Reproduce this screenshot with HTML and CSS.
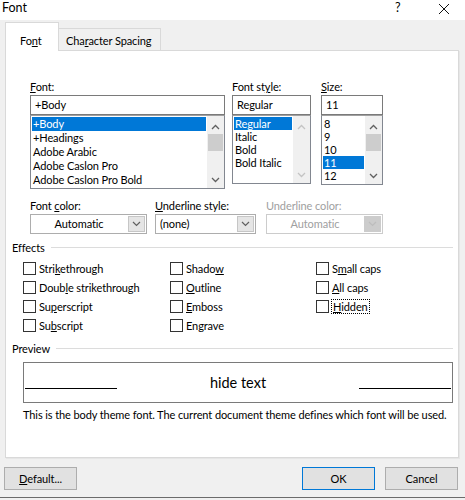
FILE: index.html
```html
<!DOCTYPE html>
<html>
<head>
<meta charset="utf-8">
<title>Font</title>
<link rel="stylesheet" href="styles.css">
</head>
<body>
<div class="dialog">
  <div class="titlebar">
    <span class="title">Font</span>
    <span class="help">?</span>
    <svg class="close" width="12" height="12" viewBox="0 0 12 12"><path d="M1 1L11 11M11 1L1 11" stroke="#111" stroke-width="1" fill="none"/></svg>
  </div>
  <div class="tabs">
    <div class="tab active">Fo<u>n</u>t</div>
    <div class="tab">Cha<u>r</u>acter Spacing</div>
  </div>
  <div class="panel">
    <div class="pickers">
      <div class="picker col-font">
        <div class="label"><u>F</u>ont:</div>
        <div class="input">+Body</div>
        <div class="list list-font">
          <div class="items rows14">
            <div class="item sel">+Body</div>
            <div class="item">+Headings</div>
            <div class="item">Adobe Arabic</div>
            <div class="item">Adobe Caslon Pro</div>
            <div class="item">Adobe Caslon Pro Bold</div>
          </div>
          <div class="scrollbar">
            <svg class="arrow" width="9" height="6" viewBox="0 0 9 6"><path d="M1 5L4.5 1.5L8 5" fill="none" stroke="#606060" stroke-width="1.3"/></svg>
            <div class="thumb"></div>
            <div class="spacer"></div>
            <svg class="arrow" width="9" height="6" viewBox="0 0 9 6"><path d="M1 1L4.5 4.5L8 1" fill="none" stroke="#606060" stroke-width="1.3"/></svg>
          </div>
        </div>
      </div>
      <div class="picker col-style">
        <div class="label">Font st<u>y</u>le:</div>
        <div class="input">Regular</div>
        <div class="list list-style">
          <div class="items rows13">
            <div class="item sel">Regular</div>
            <div class="item">Italic</div>
            <div class="item">Bold</div>
            <div class="item">Bold Italic</div>
          </div>
          <div class="scrollbar disabled">
            <svg class="arrow" width="9" height="6" viewBox="0 0 9 6"><path d="M1 5L4.5 1.5L8 5" fill="none" stroke="#c4c4c4" stroke-width="1.3"/></svg>
            <div class="spacer"></div>
            <svg class="arrow" width="9" height="6" viewBox="0 0 9 6"><path d="M1 1L4.5 4.5L8 1" fill="none" stroke="#c4c4c4" stroke-width="1.3"/></svg>
          </div>
        </div>
      </div>
      <div class="picker col-size">
        <div class="label"><u>S</u>ize:</div>
        <div class="input">11</div>
        <div class="list list-size">
          <div class="items rows13">
            <div class="item">8</div>
            <div class="item">9</div>
            <div class="item">10</div>
            <div class="item sel">11</div>
            <div class="item">12</div>
          </div>
          <div class="scrollbar">
            <svg class="arrow" width="9" height="6" viewBox="0 0 9 6"><path d="M1 5L4.5 1.5L8 5" fill="none" stroke="#606060" stroke-width="1.3"/></svg>
            <div class="thumb"></div>
            <div class="spacer"></div>
            <svg class="arrow" width="9" height="6" viewBox="0 0 9 6"><path d="M1 1L4.5 4.5L8 1" fill="none" stroke="#606060" stroke-width="1.3"/></svg>
          </div>
        </div>
      </div>
    </div>

    <div class="combos">
      <div class="combo-col c1">
        <div class="label">Font <u>c</u>olor:</div>
        <div class="combo">
          <span class="combo-text center">Automatic</span>
          <span class="combo-btn"><svg width="9" height="6" viewBox="0 0 9 6"><path d="M1 1L4.5 4.5L8 1" fill="none" stroke="#606060" stroke-width="1.2"/></svg></span>
        </div>
      </div>
      <div class="combo-col c2">
        <div class="label"><u>U</u>nderline style:</div>
        <div class="combo">
          <span class="combo-text">(none)</span>
          <span class="combo-btn"><svg width="9" height="6" viewBox="0 0 9 6"><path d="M1 1L4.5 4.5L8 1" fill="none" stroke="#606060" stroke-width="1.2"/></svg></span>
        </div>
      </div>
      <div class="combo-col c3">
        <div class="label disabled-text">Underline color:</div>
        <div class="combo disabled">
          <span class="combo-text center">Automatic</span>
          <span class="combo-btn"><svg width="9" height="6" viewBox="0 0 9 6"><path d="M1 1L4.5 4.5L8 1" fill="none" stroke="#bdbdbd" stroke-width="1.2"/></svg></span>
        </div>
      </div>
    </div>

    <div class="group-head effects-head"><span>Effects</span><div class="rule"></div></div>
    <div class="effects">
      <div class="check"><span class="box"></span><span>Stri<u>k</u>ethrough</span></div>
      <div class="check"><span class="box"></span><span>Shado<u>w</u></span></div>
      <div class="check"><span class="box"></span><span>S<u>m</u>all caps</span></div>
      <div class="check"><span class="box"></span><span>Doub<u>l</u>e strikethrough</span></div>
      <div class="check"><span class="box"></span><span><u>O</u>utline</span></div>
      <div class="check"><span class="box"></span><span><u>A</u>ll caps</span></div>
      <div class="check"><span class="box"></span><span>Su<u>p</u>erscript</span></div>
      <div class="check"><span class="box"></span><span><u>E</u>mboss</span></div>
      <div class="check"><span class="box"></span><span class="focus"><u>H</u>idden</span></div>
      <div class="check"><span class="box"></span><span>Su<u>b</u>script</span></div>
      <div class="check"><span class="box"></span><span>En<u>g</u>rave</span></div>
    </div>

    <div class="group-head preview-head"><span>Preview</span><div class="rule"></div></div>
    <div class="preview">
      <div class="pline"></div>
      <div class="ptext">hide text</div>
      <div class="pline"></div>
    </div>
    <div class="desc">This is the body theme font. The current document theme defines which font will be used.</div>
  </div>

  <div class="footer">
    <button class="btn"><u>D</u>efault...</button>
    <div class="grow"></div>
    <button class="btn default">OK</button>
    <button class="btn">Cancel</button>
  </div>
  <div class="frame-bottom"></div>
</div>
</body>
</html>
```

FILE: styles.css
```css
* { box-sizing: border-box; }
html, body { margin: 0; padding: 0; }
body {
  width: 465px;
  height: 500px;
  overflow: hidden;
  background: #f0f0f0;
  font-family: Lato, "Noto Sans", sans-serif;
  font-size: 11px;
  letter-spacing: -0.1px;
  color: #000;
}
u { text-decoration-thickness: 1px; text-underline-offset: 1px; }

.dialog { width: 465px; height: 500px; }

.titlebar {
  height: 20px;
  background: #fff;
  display: flex;
  align-items: flex-start;
  line-height: 16px;
}
.title { margin-left: 2px; font-size: 12.5px; letter-spacing: 0; }
.help { margin-left: auto; margin-right: 35px; width: 8px; font-size: 12.5px; }
.close { margin-top: 3px; margin-right: 15px; }

.tabs {
  height: 30px;
  display: flex;
  align-items: flex-end;
  padding-left: 5px;
}
.tab {
  height: 22px;
  padding: 4px 0 0 7px;
  line-height: 16px;
  border: 1px solid #d9d9d9;
  border-left: none;
  border-bottom: none;
  background: #f0f0f0;
  width: 102px;
  white-space: nowrap;
}
.tab.active {
  width: 54px;
  padding: 10px 0 0 14px;
  background: #fff;
  border-left: 1px solid #d9d9d9;
  margin-bottom: -1px;
  position: relative;
  z-index: 1;
  height: 29px;
}

.panel {
  margin-left: 5px;
  width: 454px;
  height: 408px;
  background: #fff;
  border: 1px solid #d9d9d9;
  box-shadow: 1px 1px 0 #e6e6e6;
}

.label { height: 15px; line-height: 15px; margin-bottom: 1px; white-space: nowrap; }
.disabled-text { color: #a0a0a0; }

.pickers {
  margin-top: 28px;
  padding-left: 24px;
  display: flex;
  align-items: flex-start;
}
.col-font { width: 195px; margin-right: 7px; }
.col-style { width: 79px; margin-right: 10px; }
.col-size { width: 62px; }

.input {
  height: 20px;
  border: 1px solid #7a7a7a;
  padding-left: 4px;
  line-height: 18px;
}
.list {
  display: flex;
  border: 1px solid #828790;
  border-top-color: #a0a0a0;
}
.list-font { height: 74px; }
.list-style { height: 69px; }
.list-size { height: 70px; }

.items { flex: 1; padding: 1px 1px 0 1px; overflow: hidden; }
.item { padding-left: 1px; white-space: nowrap; }
.rows14 .item { height: 14px; line-height: 14px; }
.rows13 .item { height: 13px; line-height: 13px; }
.item.sel { background: #0078d7; color: #fff; }

.scrollbar {
  width: 17px;
  background: #f0f0f0;
  display: flex;
  flex-direction: column;
  align-items: center;
  padding: 8px 0 5px 0;
}
.scrollbar .thumb {
  width: 15px;
  height: 17px;
  margin-top: 4px;
  background: #cdcdcd;
}
.scrollbar .spacer { flex: 1; }

.combos {
  margin-top: 9px;
  padding-left: 24px;
  display: flex;
}
.c1 { width: 117px; margin-right: 8px; }
.c2 { width: 101px; margin-right: 10px; }
.c3 { width: 117px; }
.combo {
  height: 20px;
  border: 1px solid #adadad;
  display: flex;
  background: #fff;
}
.combo-text { flex: 1; padding-left: 4px; line-height: 18px; }
.combo-text.center { text-align: center; padding-left: 0; }
.combo-btn {
  width: 17px;
  margin: 1px;
  background: #e5e5e5;
  border: 1px solid #c6c6c6;
  display: flex;
  align-items: center;
  justify-content: center;
}
.combo.disabled { border-color: #cccccc; color: #a0a0a0; }
.combo.disabled .combo-btn { background: #cccccc; border-color: #cccccc; }

.group-head {
  display: flex;
  align-items: center;
  padding-left: 6px;
  padding-right: 5px;
  height: 15px;
  line-height: 15px;
}
.group-head .rule { flex: 1; height: 1px; background: #dcdcdc; margin-left: 6px; }
.effects-head { margin-top: 6px; }
.preview-head { margin-top: 6px; }

.effects {
  margin-top: 4px;
  padding-left: 17px;
  display: grid;
  grid-template-columns: 147px 146px auto;
  grid-auto-rows: 19px;
}
.check { display: flex; align-items: center; white-space: nowrap; }
.box {
  width: 13px;
  height: 13px;
  border: 1px solid #333;
  background: #fff;
  margin-right: 3px;
  flex: none;
}
.focus { outline: 1px dotted #000; outline-offset: 0; padding: 0 1px; }

.preview {
  margin: 6px 0 0 17px;
  width: 430px;
  height: 41px;
  border: 1px solid #7a7a7a;
  display: flex;
  align-items: center;
  padding: 0 1px;
}
.pline { width: 92px; height: 1px; background: #000; margin-top: 12px; }
.ptext { flex: 1; text-align: center; font-size: 14.5px; letter-spacing: 0; }

.desc { margin-top: 4px; padding-left: 17px; line-height: 15px; white-space: nowrap; }

.footer {
  margin-top: 9px;
  display: flex;
  padding: 0 7px 0 4px;
}
.grow { flex: 1; }
.btn {
  width: 73px;
  height: 23px;
  border: 1px solid #adadad;
  background: #e1e1e1;
  font-family: inherit;
  font-size: 11px;
  letter-spacing: -0.1px;
  color: #000;
  padding: 0;
}
.btn.default { border-color: #0078d7; margin-right: 10px; }

.frame-bottom { margin-top: 7px; height: 1px; background: #6b6b6b; }
```
